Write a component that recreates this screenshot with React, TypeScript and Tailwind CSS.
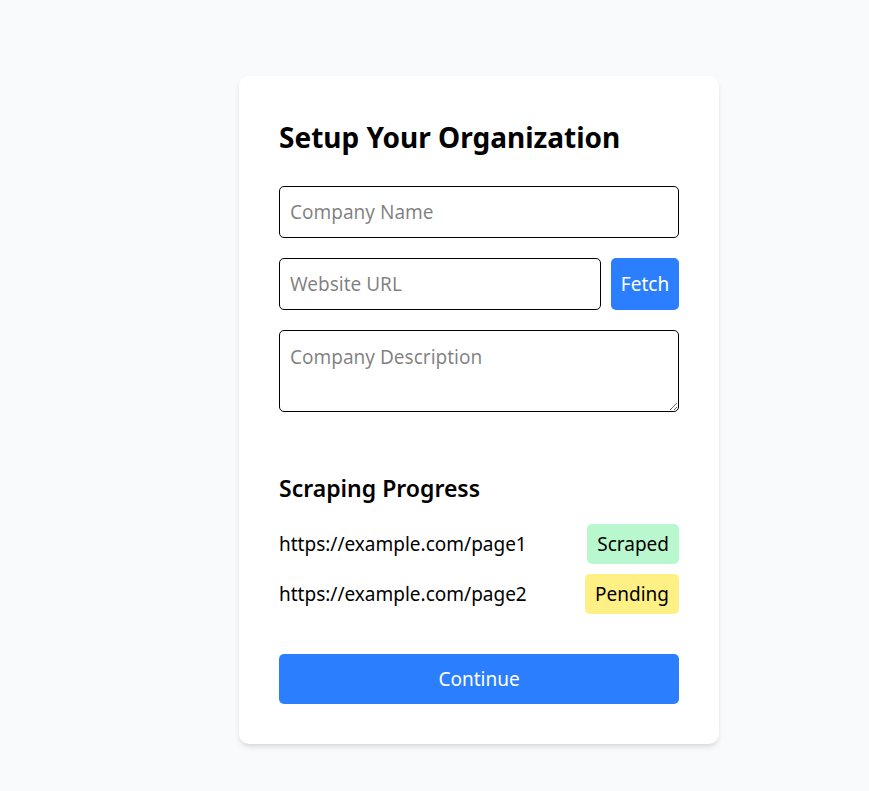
import React from "react";

const pages = [
  { url: "https://example.com/page1", status: "Scraped" },
  { url: "https://example.com/page2", status: "Pending" },
];

const App = () => {
  return (
    <div className="min-h-screen bg-gray-50 pt-[76px] pl-[239px] pb-[47px] font-['Segoe_UI','Noto_Sans',sans-serif] text-black">
      <div className="w-[480px] rounded-[10px] bg-white p-10 shadow-md">
        <h1 className="mt-[3px] mb-[31px] text-[28px] leading-[36px] font-bold">Setup Your Organization</h1>

        <div className="flex flex-col gap-5">
          <input
            type="text"
            placeholder="Company Name"
            className="h-[52px] w-full rounded-[5px] border border-black px-[10px] text-[19px] outline-none"
          />
          <div className="flex gap-[10px]">
            <input
              type="text"
              placeholder="Website URL"
              className="h-[52px] min-w-0 flex-1 rounded-[5px] border border-black px-[10px] text-[19px] outline-none"
            />
            <button className="w-[68px] rounded-[5px] bg-blue-500 text-[19px] text-white">Fetch</button>
          </div>
          <textarea
            placeholder="Company Description"
            className="block h-[82px] w-full rounded-[5px] border border-black px-[10px] py-[12px] text-[19px] leading-[28px] outline-none"
          />
        </div>

        <h2 className="mt-[60px] mb-5 text-[23px] leading-[32px] font-semibold">Scraping Progress</h2>

        <div className="flex flex-col gap-[10px]">
          {pages.map((p) => (
            <div key={p.url} className="flex items-center justify-between">
              <span className="text-[19px]">{p.url}</span>
              <span
                className={
                  p.status === "Scraped"
                    ? "rounded-[5px] bg-green-200 px-[10px] py-[6px] text-[19px] leading-[28px]"
                    : "rounded-[5px] bg-yellow-200 px-[10px] py-[6px] text-[19px] leading-[28px]"
                }
              >
                {p.status}
              </span>
            </div>
          ))}
        </div>

        <button className="mt-10 h-[50px] w-full rounded-[5px] bg-blue-500 text-[19px] text-white">Continue</button>
      </div>
    </div>
  );
};

export default App;
